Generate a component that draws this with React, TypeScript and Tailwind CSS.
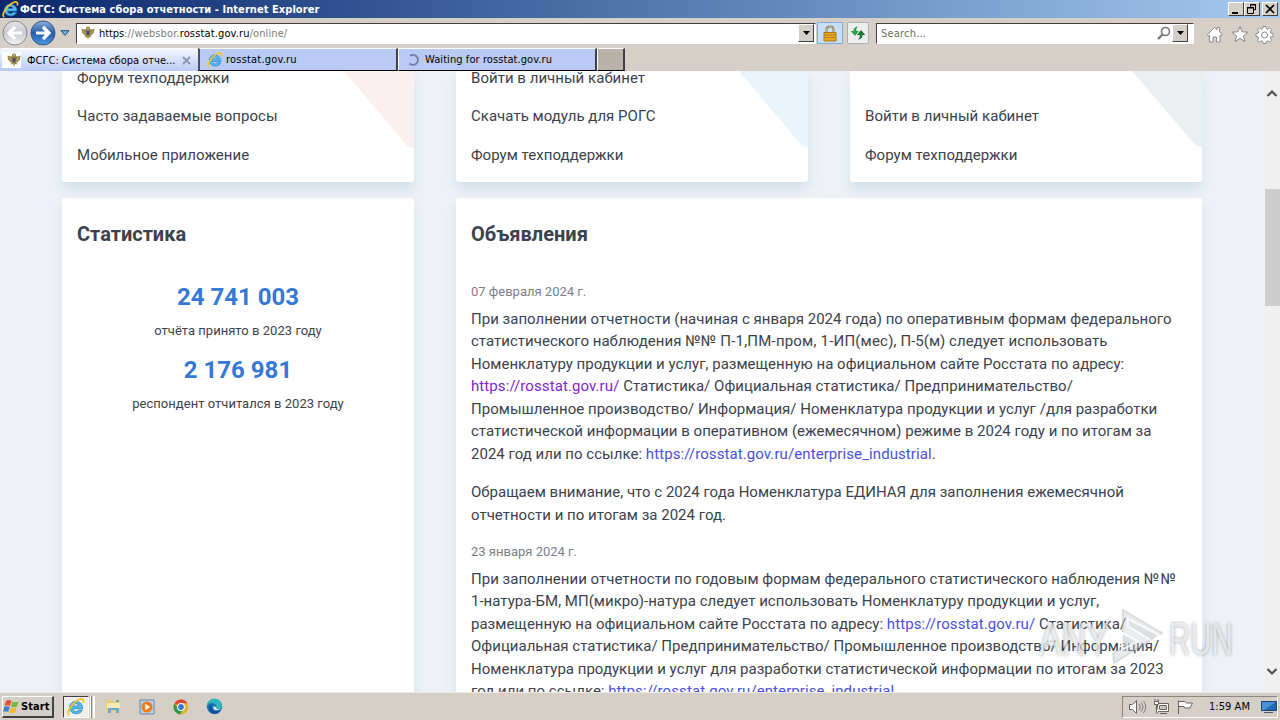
import React from 'react';

const ui = 'font-[Tahoma,"DejaVu_Sans_Condensed","DejaVu_Sans",sans-serif] text-[11px] leading-[13px] text-black whitespace-nowrap';
const raised = 'border border-t-white border-l-white border-r-[#404040] border-b-[#404040] bg-[#d4d0c8]';

function IELogo({ size }: { size: number }) {
    return (
        <svg width={size} height={size} viewBox="0 0 16 16" className="shrink-0">
            <path d="M14 9.500H5.300c.3 3 4 3 5 1.200h3.300c-1.700 5-11.300 4.500-11.300-2.500 0-7.200 12-7 11.700 1.300Z M5.300 7h5c-.3-2.500-4.700-2.600-5 0Z" fill="#55b5ee" stroke="#1c7fc4" strokeWidth=".6" fillRule="evenodd" />
            <path d="M2 15.200C-1 13 4 5.500 9 2.300c4-2.500 6.500-1.700 5.300 1.900" fill="none" stroke="#ecc62c" strokeWidth="1.600" />
        </svg>
    );
}

function Eagle() {
    return (
        <svg width="14" height="14" viewBox="0 0 14 14" className="shrink-0">
            <path d="M.5 2.500 3.500 3.500 5 3V1.500L7 .3l2 1.200V3l1.500.5 3-1-.5 4L10.500 9l-1 1 .5 1.500-2-.5-1 2.800L6 11l-2 .5.500-1.500-1-1L1 6.500Z" fill="#8f8450" />
            <path d="M2 4.500 4.500 7M12 4.500 9.500 7M7 1v2.500M5 8.500l-1.500 1M9 8.500l1.500 1M7 10.500v2.500" stroke="#dcc05a" strokeWidth="1" />
            <path d="M5.500 5h3v3L7 9.500 5.500 8Z" fill="#4a4270" />
        </svg>
    );
}

function Arrow({ blue }: { blue?: boolean }) {
    return (
        <svg width="26" height="26" viewBox="0 0 26 26" className="shrink-0">
            <defs>
                <linearGradient id="blueBtn" x1="0" y1="0" x2="0" y2="1">
                    <stop offset="0" stopColor="#8fb0dc" />
                    <stop offset=".5" stopColor="#245aa8" />
                    <stop offset="1" stopColor="#4e9ae0" />
                </linearGradient>
                <linearGradient id="greyBtn" x1="0" y1="0" x2="0" y2="1">
                    <stop offset="0" stopColor="#e3e4e6" />
                    <stop offset=".5" stopColor="#c6cad1" />
                    <stop offset="1" stopColor="#f4f5f7" />
                </linearGradient>
            </defs>
            <circle cx="13" cy="13" r="12" fill={blue ? 'url(#blueBtn)' : 'url(#greyBtn)'} stroke={blue ? '#37588c' : '#85878d'} />
            {blue
                ? <path d="M6 13h12M13 7l6 6-6 6" fill="none" stroke="#fff" strokeWidth="3.200" />
                : <path d="M20 13H8M13 7l-6 6 6 6" fill="none" stroke="#fff" strokeWidth="3.200" />}
        </svg>
    );
}

function DropButton() {
    return (
        <div className={`${raised} flex h-[18px] w-4 items-center justify-center`}>
            <svg width="7" height="4" viewBox="0 0 7 4"><path d="M0 0h7L3.500 4Z" /></svg>
        </div>
    );
}

function TitleBar() {
    return (
        <div className="flex h-[18px] items-center bg-linear-to-r from-[#0c266c] to-[#a6caf0] pl-[2px] pr-[2px]">
            <IELogo size={17} />
            <span className={`${ui} ml-px flex-1 font-bold text-white! tracking-[0.06px]`}>ФСГС: Система сбора отчетности - Internet Explorer</span>
            <div className={`${raised} h-[14px] w-4`}>
                <svg width="14" height="12"><path d="M3 9h6v2H3z" /></svg>
            </div>
            <div className={`${raised} h-[14px] w-4`}>
                <svg width="14" height="12" fill="none" stroke="#000"><path d="M5 1.500h6M5.500 1v3M10.500 1v6M8 6.500h3M5 2h6M3 5h6M2.500 4v6.500h6V4" /><path d="M2 4.500h7" /></svg>
            </div>
            <div className={`${raised} ml-[2px] h-[14px] w-4`}>
                <svg width="14" height="12"><path d="m3 2 8 8M11 2l-8 8" stroke="#000" strokeWidth="1.700" /></svg>
            </div>
        </div>
    );
}

function Toolbar() {
    return (
        <div className="flex h-[30px] items-center bg-[#d5cfc8]">
            <div className="ml-[2px] flex w-[54px] gap-[2px]">
                <Arrow />
                <Arrow blue />
            </div>
            <svg width="10" height="6" viewBox="0 0 10 6" className="ml-[4px]"><path d="M1 .7h8L5 5.300Z" fill="#74b5df" stroke="#254675" /></svg>
            <div className="ml-[6px] flex h-[21px] w-[740px] items-center border border-t-[#404040] border-l-[#404040] border-r-white border-b-white bg-white pl-[4px] pr-[1px]">
                <Eagle />
                <span className={`${ui} ml-[4px] flex-1 text-[#808080]!`}>
                    <span className="text-black tracking-[-0.1px]">https</span>
                    <span className="tracking-[0.14px]">://websbor.</span>
                    <span className="text-black tracking-[0.14px]">rosstat.gov.ru</span>
                    <span className="tracking-[0.1px]">/online/</span>
                </span>
                <DropButton />
            </div>
            <div className="ml-px flex h-[22px] w-[26px] items-center justify-center border border-[#84acdd] bg-[#c8dff8]">
                <svg width="14" height="17" viewBox="0 0 14 17">
                    <path d="M3.500 8V4.500c0-4 7-4 7 0V8" fill="none" stroke="#8b7a50" strokeWidth="2" />
                    <path d="M3.500 8V4.500c0-4 7-4 7 0V8" fill="none" stroke="#d8cfa8" strokeWidth=".7" />
                    <path d="M1 7.500h12v8.500H1z" fill="#e9a91c" stroke="#a67719" />
                    <path d="M1.500 10h11M1.500 12.500h11" stroke="#b8801b" />
                </svg>
            </div>
            <div className="ml-[4px] flex h-[22px] w-[22px] items-center justify-center rounded-[2px] border border-[#aeb0b2] bg-[#eceeee]">
                <svg width="16" height="16" viewBox="0 0 16 16">
                    <path d="M8 1.500C4.500 1.500 3.500 4 3.500 6H.7l4.300 5 4-5H6.300c0-2 .2-3.500 1.700-4.500Z" fill="#2ca34a" />
                    <path d="M8 14.500c3.500 0 4.500-2.500 4.500-4.500h2.800L11 5l-4 5h2.700c0 2-.2 3.500-1.700 4.500Z" fill="#167b2d" />
                </svg>
            </div>
            <div className="ml-[7px] flex h-[21px] w-[318px] items-center border border-t-[#404040] border-l-[#404040] border-r-white border-b-white bg-white pl-[4px]">
                <span className={`${ui} flex-1 text-[#6d6d6d]! tracking-[0.2px]`}>Search...</span>
                <svg width="14" height="14" viewBox="0 0 14 14" fill="none" stroke="#77777b"><circle cx="8.500" cy="5.500" r="4" strokeWidth="1.600" /><path d="m5.500 8.500-4.500 4.500" strokeWidth="2.400" /></svg>
                <span className="ml-px mr-[5px]"><DropButton /></span>
            </div>
            <svg width="70" height="20" viewBox="0 0 70 20" className="ml-[12px] mt-[3px]" fill="#fff" stroke="#8a8a8a">
                <path d="m1.500 9.500 7-7 2.500 2.300V2.500h2.500v4l2.500 3-1 1.500-1-.8V17h-3.500v-5H7v5H3.500v-6.500l-1 .8Z" />
                <path d="m34 1.500 2.200 5.300 5.800.4-4.500 3.700 1.500 5.600-5-3.100-5 3.100 1.500-5.600-4.500-3.700 5.800-.4Z" />
                <path d="M57 1.500h3l.4 2.200 1.300.5 1.900-1.300 2 2-1.300 1.900.5 1.300 2.200.4v3l-2.200.4-.5 1.300 1.300 1.900-2 2-1.900-1.300-1.300.5-.4 2.200h-3l-.4-2.200-1.300-.5-1.900 1.300-2-2 1.300-1.900-.5-1.300-2.200-.4v-3l2.200-.4.5-1.300-1.300-1.900 2-2 1.900 1.300 1.300-.5Z" />
                <circle cx="58.500" cy="10" r="3" />
            </svg>
        </div>
    );
}

function Tabs() {
    return (
        <div className="flex h-[23px] bg-[#d5cfc8]">
            <div className="flex w-[198px] items-center rounded-t-[2px] border-t border-white bg-linear-to-b from-[#f4f7ff] to-[#b9c9f3] pl-[2px]">
                <div className="flex h-4 w-[19px] shrink-0 items-center justify-center bg-white pl-[6px] pr-[2px]"><Eagle /></div>
                <span className={`${ui} ml-[6px] w-[153px]`}>ФСГС: Система сбора отче...</span>
                <svg width="9" height="9" viewBox="0 0 9 9" className="ml-[2px]"><path d="m1 1 7 7M8 1 1 8" stroke="#8d94a8" strokeWidth="1.800" /></svg>
            </div>
            <div className="flex w-[200px] items-center border-t border-r-2 border-b border-l-2 border-t-white border-r-[#40404a] border-b-black border-l-[#50505a] bg-[#b9cbf5] pl-[7px]">
                <IELogo size={16} />
                <span className={`${ui} ml-[3px] tracking-[0.2px]`}>rosstat.gov.ru</span>
            </div>
            <div className="flex w-[199px] items-center border-t border-r-2 border-b border-l border-t-white border-r-[#40404a] border-b-black border-l-white bg-[#b9cbf5] pl-[8px]">
                <svg width="12" height="12" viewBox="0 0 12 12"><path d="M3 1.800A5 5 0 1 1 2.500 9.500" fill="none" stroke="#7580a4" strokeWidth="2" /></svg>
                <span className={`${ui} ml-[6px] tracking-[0.08px]`}>Waiting for rosstat.gov.ru</span>
            </div>
            <div className="w-[28px] border-t border-r-2 border-b border-l border-t-white border-r-[#40404a] border-b-black border-l-white bg-[#b8b2a9]" />
        </div>
    );
}

const cards = [
    { links: ['Форум техподдержки', 'Часто задаваемые вопросы', 'Мобильное приложение'], fill: '#faf0ef', d: 'M1 0h70v77c-5 0-8-3-11-7Z' },
    { links: ['Войти в личный кабинет', 'Скачать модуль для РОГС', 'Форум техподдержки'], fill: '#eaf4fb', d: 'M2 0h69v76c-5 0-8-3-10-6Z' },
    { links: ['', 'Войти в личный кабинет', 'Форум техподдержки'], fill: '#ebeff0', d: 'M1 0h70v76c-5 0-8-3-11-7Z' },
];

const cardStyle = 'bg-white shadow-[0_8px_12px_rgba(140,170,205,0.25)]';

function LinkCards() {
    return (
        <div className="flex gap-[42px]">
            {cards.map((card, i) => (
                <div key={i} className={`${cardStyle} relative h-[111px] w-[352px] rounded-b-[3px] px-[15px]`}>
                    <svg width="71" height="80" className="absolute top-0 right-0"><path d={card.d} fill={card.fill} /></svg>
                    <div className="-mt-[4.250px]">
                        {card.links.map((link, j) => (
                            <p key={j} className="h-[38.500px] text-[15px] leading-[22.500px] whitespace-nowrap tracking-[0.03px]">{link}</p>
                        ))}
                    </div>
                </div>
            ))}
        </div>
    );
}

function A({ children, visited }: { children: string, visited?: boolean }) {
    return <span className={`tracking-[0.09px] ${visited ? 'text-[#8224d6]' : 'text-[#4a4fe0]'}`}>{children}</span>;
}

function Lines({ children }: { children: React.ReactNode }) {
    return <p className="text-[15px] leading-[22.500px] whitespace-nowrap tracking-[0.018px]">{children}</p>;
}

function Statistics() {
    return (
        <div className={`${cardStyle} h-[560px] w-[352px] rounded-t-[3px] px-[15px] pt-[21px]`}>
            <h2 className="text-[20px] leading-[30px] font-bold">Статистика</h2>
            <div className="mt-[30px] text-center text-[13px] leading-[20px]">
                <p className="text-[24px] leading-[36px] font-bold text-[#3578d6]">24 741 003</p>
                <p className="mt-[6px] tracking-[0.03px]">отчёта принято в 2023 году</p>
                <p className="mt-[11px] text-[24px] leading-[36px] font-bold text-[#3578d6]">2 176 981</p>
                <p className="mt-[6px] tracking-[0.03px]">респондент отчитался в 2023 году</p>
            </div>
        </div>
    );
}

function News() {
    return (
        <div className={`${cardStyle} h-[560px] w-[746px] rounded-t-[3px] px-[15px] pt-[21px]`}>
            <h2 className="text-[20px] leading-[30px] font-bold">Объявления</h2>
            <p className="mt-[33px] text-[13px] leading-[20px] text-[#7b7f86]">07 февраля 2024 г.</p>
            <div className="mt-[5.750px]">
                <Lines>
                    При заполнении отчетности (начиная с января 2024 года) по оперативным формам федерального<br />
                    статистического наблюдения <span className="tracking-[0.2px]">№№ П-1,ПМ-пром, 1-ИП(мес),</span> П-5(м) следует использовать<br />
                    Номенклатуру продукции и услуг, размещенную на официальном сайте Росстата по адресу:<br />
                    <A visited>https://rosstat.gov.ru/</A> Статистика/ Официальная статистика/ Предпринимательство/<br />
                    Промышленное производство/ Информация/ Номенклатура продукции и услуг /для разработки<br />
                    статистической информации в оперативном (ежемесячном) режиме в 2024 году и по итогам за<br />
                    2024 год или по ссылке: <A>https://rosstat.gov.ru/enterprise_industrial</A>.
                </Lines>
            </div>
            <div className="mt-[16px]">
                <Lines>
                    Обращаем внимание, что с 2024 года Номенклатура ЕДИНАЯ для заполнения ежемесячной<br />
                    отчетности и по итогам за 2024 год.
                </Lines>
            </div>
            <p className="mt-[15.500px] text-[13px] leading-[20px] text-[#7b7f86]">23 января 2024 г.</p>
            <div className="mt-[6px]">
                <Lines>
                    При заполнении отчетности по годовым формам федерального статистического наблюдения <span className="tracking-[1.5px]">№№</span><br />
                    1-натура-БМ, МП(микро)-натура следует использовать Номенклатуру продукции и услуг,<br />
                    размещенную на официальном сайте Росстата по адресу: <A>https://rosstat.gov.ru/</A> Статистика/<br />
                    Официальная статистика/ Предпринимательство/ Промышленное производство/ Информация/<br />
                    Номенклатура продукции и услуг для разработки статистической информации по итогам за 2023<br />
                    год или по ссылке: <A>https://rosstat.gov.ru/enterprise_industrial</A>
                </Lines>
            </div>
        </div>
    );
}

function ScrollBar() {
    return (
        <div className="flex h-full w-4 flex-col items-center bg-[#f0f0f0] pt-[18px] pb-[16px]">
            <svg width="12" height="9" viewBox="0 0 12 9"><path d="m1.500 7 4.500-4.500L10.500 7" fill="none" stroke="#505050" strokeWidth="2.200" /></svg>
            <div className="mt-[91px] ml-px h-[117px] w-[15px] bg-[#cdcdcd]" />
            <svg width="12" height="9" viewBox="0 0 12 9" className="mt-auto"><path d="m1.500 2 4.500 4.500L10.500 2" fill="none" stroke="#505050" strokeWidth="2.200" /></svg>
        </div>
    );
}

function Watermark() {
    return (
        <div className="absolute top-[606px] left-[1039px] flex h-[66px] items-center font-['Liberation_Sans',Arial,sans-serif] text-[46px] leading-[66px] text-white/65 [text-shadow:0_0_4px_rgba(90,100,110,0.6)]">
            <span className="w-[71px]"><span className="inline-block origin-left scale-x-[0.740]">ANY</span></span>
            <svg width="56" height="60" viewBox="0 0 56 60" className="mt-[-4px]" fill="#c9ced3" fillOpacity=".4" stroke="#fff" strokeOpacity=".8" strokeWidth="2">
                <path d="M13 3 52 26 4 56 3 46 12 41Z" stroke="#a9b0b7" strokeOpacity=".35" />
                <path d="M18 12v7l24 15 7-6Z" />
                <path d="m12 26 16 8-16 9Z" />
            </svg>
            <span className="ml-[3px] w-[66px]"><span className="inline-block origin-left scale-x-[0.640]">RUN</span></span>
        </div>
    );
}

function TaskBar() {
    return (
        <div className="flex h-7 items-center border-t border-[#ece9e4] bg-[#d5cfc8] pl-[2px] pr-[2px]">
            <div className={`${raised} flex h-[22px] w-[52px] items-center gap-px border-r-2 border-b-2`}>
                <svg width="17" height="17" viewBox="0 0 17 17">
                    <path d="M3 3c2-1.500 4-1 5.500 0L7 8C5 7 3.500 7 1.500 8Z" fill="#e6532a" />
                    <path d="M9.500 3.500c2 1 4 1 6 0L14 8.500c-2 1-4 1-6 0Z" fill="#79b83c" />
                    <path d="M1.200 9c2-1 3.500-1 5.500 0l-1.500 5c-2-1-3.500-1-5 0Z" fill="#3a7fd0" />
                    <path d="M7.700 9.500c2 1 4 1 6 0l-1.500 5c-2 1-4 1-6 0Z" fill="#f3b92e" />
                </svg>
                <span className={`${ui} font-bold tracking-[0.1px]`}>Start</span>
            </div>
            <div className="ml-[9px] flex h-[22px] w-[26px] items-center justify-center border border-t-[#404040] border-l-[#404040] border-r-white border-b-white bg-[#f0eeea]"><IELogo size={18} /></div>
            <div className="ml-px h-[22px] w-[2px] border-r border-[#8b8781] bg-white" />
            <div className="ml-px h-[22px] w-[2px] bg-white" />
            <svg width="17" height="17" viewBox="0 0 17 17" className="ml-[10px]">
                <path d="M1 2h6l1 2h7v10H1z" fill="#e8cf7c" />
                <path d="M2 5h13v5H2z" fill="#f8eab1" />
                <path d="M3 15v-5h11v5h-3v-3H6v3Z" fill="#67a9d1" />
                <path d="M11 3h3" stroke="#66b16b" strokeWidth="2" />
            </svg>
            <svg width="16" height="16" viewBox="0 0 16 16" className="ml-[17px]">
                <path d="M1 1h14v14H1z" fill="#b7d1e8" stroke="#6688aa" />
                <circle cx="8" cy="8" r="5.500" fill="#ef7d16" />
                <path d="m6.300 4.700 5 3.300-5 3.300Z" fill="#fff" />
            </svg>
            <svg width="16" height="16" viewBox="0 0 16 16" className="ml-[18px]">
                <circle cx="8" cy="8" r="7.500" fill="#e3b72b" />
                <path d="M8 8 1.500 4.300A7.500 7.500 0 0 1 14.600 4.300H8Z" fill="#da4535" />
                <path d="M1.500 4.300A7.500 7.500 0 0 0 7 15.400L10.500 10 5 9.500Z" fill="#2d9b4d" />
                <circle cx="8" cy="8" r="3.900" fill="#fff" />
                <circle cx="8" cy="8" r="2.900" fill="#3978dc" />
            </svg>
            <svg width="17" height="17" viewBox="0 0 17 17" className="ml-[17px]">
                <circle cx="8.500" cy="8.500" r="7.700" fill="#1672b7" />
                <path d="M1 7c1-8 14-9 15 1 0 4-5 4-6 2 1-3-1-5-4-5-2 0-4 1-5 2Z" fill="#2fb5ba" />
                <path d="M6 7c-2 5 3 8 9 5-3 5-11 5-12-2 0-2 1-3 3-3Z" fill="#144f96" />
                <path d="M7.500 8c-1 4 2 5 5 4l3-1.500c-3 1-6 1-5-1Z" fill="#e3e7e8" />
            </svg>
            <div className="ml-auto flex h-[22px] w-[156px] items-center border border-t-[#8a8680] border-l-[#8a8680] border-r-white border-b-white pl-[6px]">
                <svg width="66" height="18" viewBox="0 0 66 18" fill="#fff" stroke="#64615e">
                    <path d="M.500 6.500h3L7.500 2.500v13l-4-4h-3Z" />
                    <path d="M10 6c1.500 2 1.500 4 0 6M12 4.500c2.500 3 2.500 6 0 9M14.500 3c3 4 3 8 0 12" fill="none" strokeWidth=".8" />
                    <path d="M28.500 5.500h11v8h-11zM31 15.500h7" />
                    <path d="M30.500 7.500h7v4h-7z" fill="#c8c5be" />
                    <path d="M26 1v3M29 1v3M25.500 3.500h4v3h-4zM27.500 7v8h2" />
                    <path d="M49.500 16V2.500M50 3.500h6l1.500 1.500h6l-2.500 5h-5l-1-1.500h-5" />
                </svg>
                <span className={`${ui} ml-[14px] tracking-[0.05px]`}>1:59 AM</span>
                <svg width="16" height="14" viewBox="0 0 16 14" className="ml-[11px]"><path d="M.500 1.500h15v9H.500z" fill="#2469b6" stroke="#164477" /><path d="M1 2h14L3 10H1Z" fill="#4a90d9" /><path d="M3 12.500h9" stroke="#4b5968" /></svg>
            </div>
        </div>
    );
}

export default function App() {
    return (
        <div className="relative flex h-[720px] w-[1280px] flex-col overflow-hidden bg-[#eef2f6]">
            <TitleBar />
            <Toolbar />
            <Tabs />
            <div className="flex h-[621px] overflow-hidden font-[Roboto,sans-serif] text-[#3b424d]">
                <div className="flex-1 pl-[62px]">
                    <LinkCards />
                    <div className="mt-4 flex gap-[42px]">
                        <Statistics />
                        <News />
                    </div>
                </div>
                <ScrollBar />
            </div>
            <TaskBar />
            <Watermark />
        </div>
    );
}
